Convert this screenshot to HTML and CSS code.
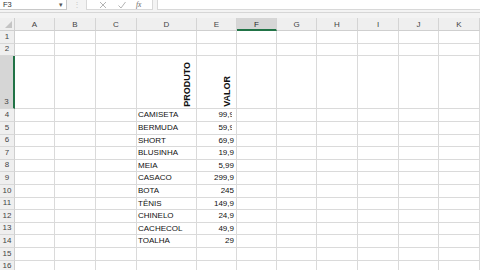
FILE: index.html
```html
<!DOCTYPE html>
<html>
<head>
<meta charset="utf-8">
<link rel="stylesheet" href="styles.css">
</head>
<body>
<div class="app">
  <div class="topbar">
    <div class="namebox"><span>F3</span><span class="caret">▾</span></div>
    <div class="grip">⋮</div>
    <div class="fbtns">
      <svg class="ico" width="10" height="10" viewBox="0 0 10 10"><path d="M2 2 L8 8 M8 2 L2 8" stroke="#b4b4b4" stroke-width="1" fill="none"/></svg>
      <svg class="ico" width="10" height="10" viewBox="0 0 10 10"><path d="M1.5 5.5 L4 8 L8.5 2" stroke="#b4b4b4" stroke-width="1" fill="none"/></svg>
      <span class="fx">fx</span>
    </div>
    <div class="finput"></div>
  </div>
  <div class="gap"></div>
  <div class="sheet">
    <div class="corner"><span class="tri"></span></div>
    <div class="ch">A</div><div class="ch">B</div><div class="ch">C</div><div class="ch">D</div><div class="ch">E</div><div class="ch sel">F</div><div class="ch">G</div><div class="ch">H</div><div class="ch">I</div><div class="ch">J</div><div class="ch">K</div>

    <div class="rh">1</div><div class="c"></div><div class="c"></div><div class="c"></div><div class="c"></div><div class="c"></div><div class="c"></div><div class="c"></div><div class="c"></div><div class="c"></div><div class="c"></div><div class="c"></div>
    <div class="rh">2</div><div class="c"></div><div class="c"></div><div class="c"></div><div class="c"></div><div class="c"></div><div class="c"></div><div class="c"></div><div class="c"></div><div class="c"></div><div class="c"></div><div class="c"></div>
    <div class="rh sel">3</div><div class="c"></div><div class="c"></div><div class="c"></div><div class="c vt"><span>PRODUTO</span></div><div class="c vt"><span>VALOR</span></div><div class="c"></div><div class="c"></div><div class="c"></div><div class="c"></div><div class="c"></div><div class="c"></div>
    <div class="rh">4</div><div class="c"></div><div class="c"></div><div class="c"></div><div class="c t">CAMISETA</div><div class="c n"><span class="clip">99,9</span></div><div class="c"></div><div class="c"></div><div class="c"></div><div class="c"></div><div class="c"></div><div class="c"></div>
    <div class="rh">5</div><div class="c"></div><div class="c"></div><div class="c"></div><div class="c t">BERMUDA</div><div class="c n"><span class="clip">59,9</span></div><div class="c"></div><div class="c"></div><div class="c"></div><div class="c"></div><div class="c"></div><div class="c"></div>
    <div class="rh">6</div><div class="c"></div><div class="c"></div><div class="c"></div><div class="c t">SHORT</div><div class="c n">69,9</div><div class="c"></div><div class="c"></div><div class="c"></div><div class="c"></div><div class="c"></div><div class="c"></div>
    <div class="rh">7</div><div class="c"></div><div class="c"></div><div class="c"></div><div class="c t">BLUSINHA</div><div class="c n">19,9</div><div class="c"></div><div class="c"></div><div class="c"></div><div class="c"></div><div class="c"></div><div class="c"></div>
    <div class="rh">8</div><div class="c"></div><div class="c"></div><div class="c"></div><div class="c t">MEIA</div><div class="c n">5,99</div><div class="c"></div><div class="c"></div><div class="c"></div><div class="c"></div><div class="c"></div><div class="c"></div>
    <div class="rh">9</div><div class="c"></div><div class="c"></div><div class="c"></div><div class="c t">CASACO</div><div class="c n">299,9</div><div class="c"></div><div class="c"></div><div class="c"></div><div class="c"></div><div class="c"></div><div class="c"></div>
    <div class="rh">10</div><div class="c"></div><div class="c"></div><div class="c"></div><div class="c t">BOTA</div><div class="c n">245</div><div class="c"></div><div class="c"></div><div class="c"></div><div class="c"></div><div class="c"></div><div class="c"></div>
    <div class="rh">11</div><div class="c"></div><div class="c"></div><div class="c"></div><div class="c t">TÊNIS</div><div class="c n">149,9</div><div class="c"></div><div class="c"></div><div class="c"></div><div class="c"></div><div class="c"></div><div class="c"></div>
    <div class="rh">12</div><div class="c"></div><div class="c"></div><div class="c"></div><div class="c t">CHINELO</div><div class="c n">24,9</div><div class="c"></div><div class="c"></div><div class="c"></div><div class="c"></div><div class="c"></div><div class="c"></div>
    <div class="rh">13</div><div class="c"></div><div class="c"></div><div class="c"></div><div class="c t">CACHECOL</div><div class="c n">49,9</div><div class="c"></div><div class="c"></div><div class="c"></div><div class="c"></div><div class="c"></div><div class="c"></div>
    <div class="rh">14</div><div class="c"></div><div class="c"></div><div class="c"></div><div class="c t">TOALHA</div><div class="c n">29</div><div class="c"></div><div class="c"></div><div class="c"></div><div class="c"></div><div class="c"></div><div class="c"></div>
    <div class="rh">15</div><div class="c"></div><div class="c"></div><div class="c"></div><div class="c"></div><div class="c"></div><div class="c"></div><div class="c"></div><div class="c"></div><div class="c"></div><div class="c"></div><div class="c"></div>
    <div class="rh">16</div><div class="c"></div><div class="c"></div><div class="c"></div><div class="c"></div><div class="c"></div><div class="c"></div><div class="c"></div><div class="c"></div><div class="c"></div><div class="c"></div><div class="c"></div>
  </div>
</div>
</body>
</html>
```
FILE: styles.css
```css
* { box-sizing: border-box; }
html, body { margin: 0; padding: 0; }
body {
  width: 480px; height: 270px; overflow: hidden;
  background: #fff;
  font-family: "Liberation Sans", Arial, sans-serif;
  font-size: 8px;
  color: #222;
}
.app { width: 480px; height: 270px; overflow: hidden; }
.topbar {
  height: 13px;
  background: #f3f3f3;
  display: flex;
  align-items: flex-start;
  border-bottom: 1px solid #d6d6d6;
}
.namebox {
  width: 67px; height: 10px;
  background: #fff;
  border: 1px solid #c8c8c8;
  border-top: none; border-left: none;
  display: flex; align-items: center; justify-content: space-between;
  padding: 0 3px 0 3px;
  font-size: 7.5px; color: #333;
}
.caret { font-size: 7px; color: #555; }
.grip { width: 19px; text-align: center; color: #c8c8c8; font-size: 8px; line-height: 10px; }
.fbtns {
  width: 67px; height: 10px;
  background: #fff;
  border: 1px solid #d8d8d8; border-top: none;
  display: flex; align-items: center; justify-content: space-around;
  padding: 0 6px;
}
.fx { font-family: "Liberation Serif", serif; font-style: italic; font-size: 7.5px; color: #666; }
.finput {
  flex: 1; height: 10px; margin-left: 4px;
  background: #fff; border: 1px solid #d8d8d8; border-top: none; border-right: none;
}
.gap { height: 5px; background: #f3f3f3; }
.sheet {
  display: grid;
  grid-template-columns: 15px 40px 41px 41px 60px 40px 40px 40px 41px 41px 40px 41px;
  grid-template-rows: 13px 12.6px 12.6px 53.3px repeat(13, 12.6px);
}
.corner {
  background: #efefef;
  border-right: 1px solid #cfcfcf;
  border-bottom: 1px solid #cfcfcf;
  position: relative;
}
.tri {
  position: absolute; right: 2px; bottom: 2px;
  width: 0; height: 0;
  border-left: 7px solid transparent;
  border-bottom: 7px solid #c4c4c4;
}
.ch {
  background: #efefef;
  border-right: 1px solid #d4d4d4;
  border-bottom: 1px solid #cfcfcf;
  text-align: center;
  line-height: 13px;
  color: #444;
  font-size: 8px;
}
.ch.sel { background: #d6d6d6; border-bottom: 2px solid #217346; color: #2a2a2a; }
.rh {
  background: #efefef;
  border-right: 1px solid #cfcfcf;
  border-bottom: 1px solid #d8d8d8;
  display: flex; align-items: flex-end; justify-content: center;
  padding-bottom: 1px;
  line-height: 10px;
  color: #444;
  font-size: 8px;
}
.rh.sel { background: #d6d6d6; border-right: 2px solid #217346; }
.c {
  border-right: 1px solid #dadada;
  border-bottom: 1px solid #dadada;
  overflow: hidden;
  white-space: nowrap;
  line-height: 12px;
  color: #111;
}
.t { padding-left: 1px; }
.n { text-align: right; padding-right: 2px; }
.clip {
  display: inline-block;
  width: 13.4px;
  overflow: hidden;
  vertical-align: top;
  margin-right: 2.2px;
}
.vt {
  display: flex; justify-content: flex-end; align-items: flex-end;
  padding: 0 4px 2px 0;
}
.vt span {
  writing-mode: vertical-rl;
  transform: rotate(180deg);
  font-weight: bold;
  font-size: 9px;
  line-height: 10px;
  color: #111;
}
```
